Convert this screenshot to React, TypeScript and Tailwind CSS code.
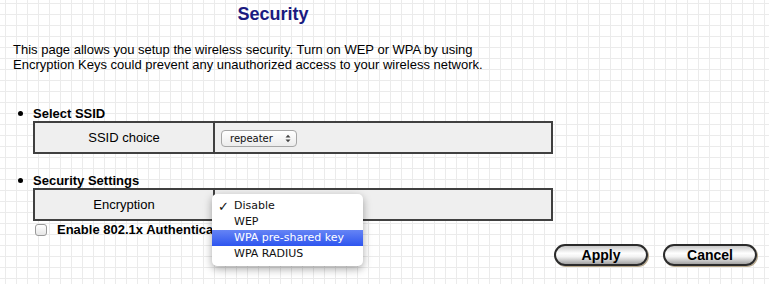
const grid =
  "bg-white bg-[image:linear-gradient(to_right,#ebebeb_1px,transparent_1px),linear-gradient(to_bottom,#ebebeb_1px,transparent_1px)] bg-[size:11px_11px] bg-[position:5px_3px]";

const encryptionOptions = [
  { label: "Disable", checked: true },
  { label: "WEP" },
  { label: "WPA pre-shared key", active: true },
  { label: "WPA RADIUS" },
];

function Bullet({ children }: { children: React.ReactNode }) {
  return (
    <div className="flex h-[15px] items-center pl-[18px] text-[13px] font-bold leading-[15px]">
      <span className="h-[5px] w-[5px] rounded-full bg-black" />
      <span className="ml-[10px]">{children}</span>
    </div>
  );
}

function Row({ label, children }: { label: string; children?: React.ReactNode }) {
  return (
    <div className="ml-[33px] flex h-[33px] w-[520px] border-2 border-[#404040] bg-[#efefef]">
      <div className="flex w-[180px] items-center justify-center border-r-2 border-[#404040] text-[13px]">
        {label}
      </div>
      <div className="flex flex-1 items-center pl-[6px]">{children}</div>
    </div>
  );
}

function PillButton({ children }: { children: React.ReactNode }) {
  return (
    <button className="flex h-[22px] w-[94px] items-center justify-center rounded-full border-2 border-[#2b2b2b] bg-[linear-gradient(to_bottom,#c9c9c9,#ffffff_40%,#f2f2f2_60%,#a3a3a3)] text-[14px] font-bold leading-none text-black shadow-[1px_1px_0_0_#b9a98c]">
      {children}
    </button>
  );
}

export default function App() {
  return (
    <div
      className={`relative h-[284px] w-[769px] overflow-hidden font-['Liberation_Sans',Arial,sans-serif] text-black ${grid}`}
    >
      <h1 className="w-[546px] pt-[4px] text-center text-[18px] font-bold leading-[21px] text-[#1a1a80]">
        Security
      </h1>

      <p className="mt-[17px] pl-[13px] text-[13px] leading-[15px]">
        This page allows you setup the wireless security. Turn on WEP or WPA by using
        <br />
        Encryption Keys could prevent any unauthorized access to your wireless network.
      </p>

      <div className="mt-[34px]">
        <Bullet>Select SSID</Bullet>
        <Row label="SSID choice">
          <div className="mt-[1px] flex h-[17px] w-[76px] items-center justify-between rounded-[4px] border border-[#a6a6a6] bg-[linear-gradient(to_bottom,#ffffff,#ececec)] pl-[8px] pr-[5px] font-['DejaVu_Sans',sans-serif] text-[10px] text-[#111]">
            <span>repeater</span>
            <svg width="6" height="9" viewBox="0 0 6 9">
              <path d="M0.5 3.5 L3 0.8 L5.5 3.5 Z M0.5 5.5 L3 8.2 L5.5 5.5 Z" fill="#444" />
            </svg>
          </div>
        </Row>
      </div>

      <div className="mt-[19px]">
        <Bullet>Security Settings</Bullet>
        <Row label="Encryption" />
      </div>

      <div className="mt-[1px] flex h-[15px] items-center pl-[35px]">
        <span className="h-[12px] w-[12px] rounded-[3px] border border-[#9a9a9a] bg-[linear-gradient(to_bottom,#ffffff,#e6e6e6)]" />
        <span className="ml-[10px] text-[13px] font-bold leading-[15px]">
          Enable 802.1x Authentication
        </span>
      </div>

      <div className="mt-[7px] flex justify-end gap-[15px] pr-[12px]">
        <PillButton>Apply</PillButton>
        <PillButton>Cancel</PillButton>
      </div>

      <div className="absolute left-[212px] top-[194px] w-[151px] rounded-[5px] bg-white py-[4px] font-['DejaVu_Sans',sans-serif] text-[11px] text-[#111] shadow-[0_3px_9px_rgba(0,0,0,0.35)]">
        {encryptionOptions.map((opt) => (
          <div
            key={opt.label}
            className={`relative flex h-[16px] items-center pl-[22px] ${
              opt.active ? "bg-[linear-gradient(to_bottom,#6584f5,#2d55ef)] text-white" : ""
            }`}
          >
            {opt.checked && (
              <span className="absolute left-[6px] text-[13px] font-bold leading-none">✓</span>
            )}
            {opt.label}
          </div>
        ))}
      </div>
    </div>
  );
}
